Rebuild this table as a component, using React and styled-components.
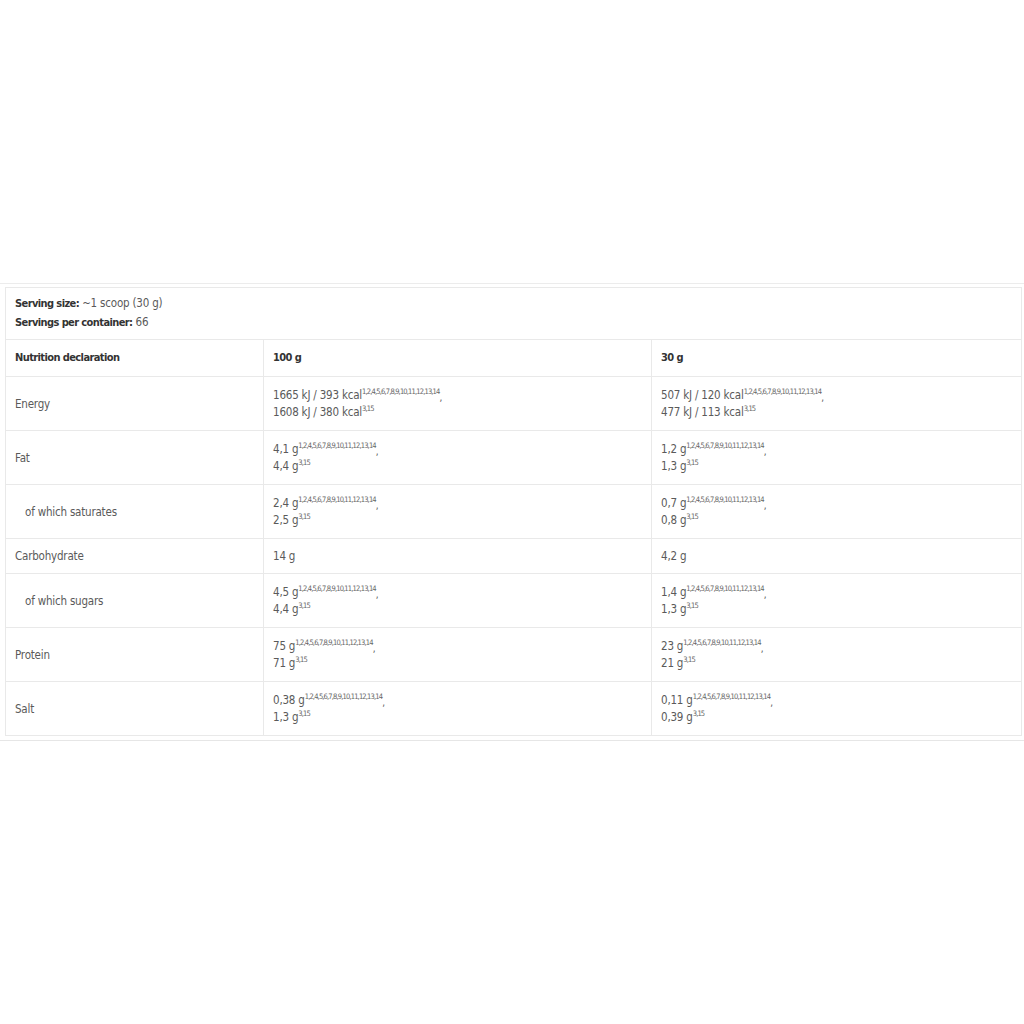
import React from 'react';
import styled, { createGlobalStyle } from 'styled-components';

const GlobalStyle = createGlobalStyle`
  html, body {
    margin: 0;
    padding: 0;
    background: #fff;
  }
  body {
    font-family: "DejaVu Sans Condensed", "Liberation Sans", sans-serif;
    color: #555;
  }
`;

const Page = styled.div`
  width: 1024px;
  height: 1024px;
  padding-top: 283px;
  box-sizing: border-box;
  overflow: hidden;
`;

const Frame = styled.div`
  border-top: 1px solid #ececec;
  border-bottom: 1px solid #e6e6e6;
  padding: 3px 0 4px 5px;
`;

const Table = styled.table`
  width: 1017px;
  border-collapse: collapse;
  font-size: 11.5px;
  letter-spacing: -0.2px;
  line-height: 16px;
`;

const Cell = styled.td`
  border: 1px solid #e9e9e9;
  padding: 0 10px 0 ${p => (p.$indent ? '19px' : '9px')};
  height: ${p => p.$h || 53}px;
  vertical-align: middle;
  color: #5a5a5a;
  font-weight: ${p => (p.$bold ? 700 : 400)};
  ${p => p.$bold && 'color: #333; font-size: 11px; letter-spacing: -0.6px;'}
`;

const ServingCell = styled.td`
  border: 1px solid #e9e9e9;
  padding: 6px 9px 7px;
  line-height: 18px;
  color: #5a5a5a;
`;

const Label = styled.strong`
  font-weight: 700;
  font-size: 11px;
  letter-spacing: -0.6px;
  color: #333;
`;

const Sup = styled.sup`
  font-size: 7.5px;
  letter-spacing: -0.85px;
  line-height: 0;
  vertical-align: 5px;
  color: #666;
`;

const Comma = styled.span`
  position: relative;
  top: 2px;
  font-size: 10px;
`;

const Value = ({ a, b }) => (
  <>
    <div>
      {a}
      <Sup>1,2,4,5,6,7,8,9,10,11,12,13,14</Sup>
      <Comma>,</Comma>
    </div>
    <div>
      {b}
      <Sup>3,15</Sup>
    </div>
  </>
);

const rows = [
  { name: 'Energy', a: ['1665 kJ / 393 kcal', '1608 kJ / 380 kcal'], b: ['507 kJ / 120 kcal', '477 kJ / 113 kcal'] },
  { name: 'Fat', a: ['4,1 g', '4,4 g'], b: ['1,2 g', '1,3 g'] },
  { name: 'of which saturates', indent: true, a: ['2,4 g', '2,5 g'], b: ['0,7 g', '0,8 g'] },
  { name: 'Carbohydrate', single: ['14 g', '4,2 g'] },
  { name: 'of which sugars', indent: true, a: ['4,5 g', '4,4 g'], b: ['1,4 g', '1,3 g'] },
  { name: 'Protein', a: ['75 g', '71 g'], b: ['23 g', '21 g'] },
  { name: 'Salt', a: ['0,38 g', '1,3 g'], b: ['0,11 g', '0,39 g'] },
];

export default function App() {
  return (
    <Page>
      <GlobalStyle />
      <Frame>
        <Table>
          <colgroup>
            <col style={{ width: 258 }} />
            <col style={{ width: 388 }} />
            <col />
          </colgroup>
          <tbody>
            <tr>
              <ServingCell colSpan={3}>
                <div><Label>Serving size:</Label> ~1 scoop (30 g)</div>
                <div><Label>Servings per container:</Label> 66</div>
              </ServingCell>
            </tr>
            <tr>
              <Cell $bold $h={36}>Nutrition declaration</Cell>
              <Cell $bold $h={36}>100 g</Cell>
              <Cell $bold $h={36}>30 g</Cell>
            </tr>
            {rows.map(r => (
              <tr key={r.name}>
                <Cell $indent={r.indent} $h={r.single ? 34 : 53}>{r.name}</Cell>
                {r.single ? (
                  <>
                    <Cell $h={34}>{r.single[0]}</Cell>
                    <Cell $h={34}>{r.single[1]}</Cell>
                  </>
                ) : (
                  <>
                    <Cell><Value a={r.a[0]} b={r.a[1]} /></Cell>
                    <Cell><Value a={r.b[0]} b={r.b[1]} /></Cell>
                  </>
                )}
              </tr>
            ))}
          </tbody>
        </Table>
      </Frame>
    </Page>
  );
}
